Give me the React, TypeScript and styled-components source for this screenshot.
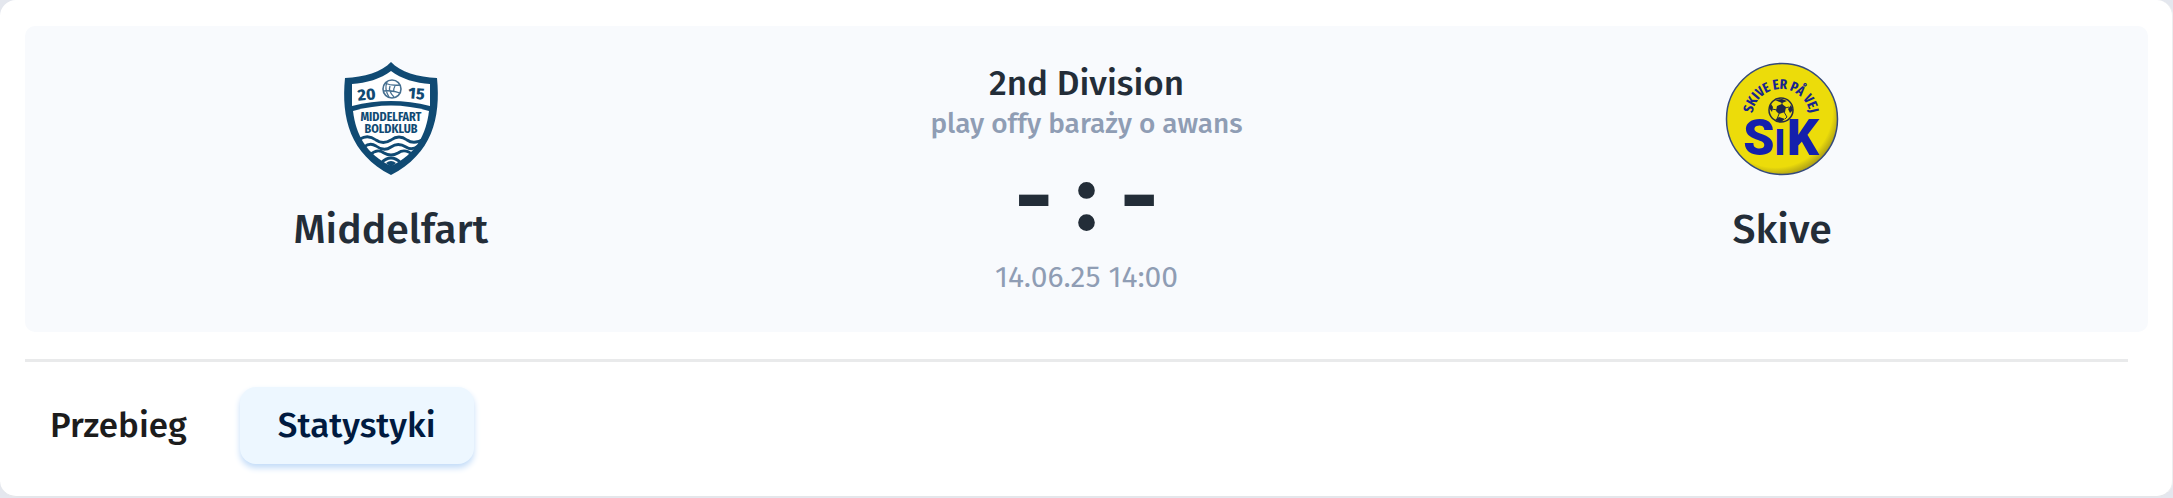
import React from "react";
import styled, { createGlobalStyle } from "styled-components";

const GlobalStyle = createGlobalStyle`
  *, *::before, *::after { box-sizing: border-box; }
  body {
    margin: 0;
    background: #e4e7ee;
    font-family: "Fira Sans", "Noto Sans", sans-serif;
    color: #232d38;
  }
`;

const Card = styled.main`
  display: flex;
  flex-direction: column;
  padding: 26px 24px 32px 25px;
  background: #ffffff;
  border-right: 1px solid #eceeef;
  border-bottom: 1px solid #e4e6e9;
  border-radius: 16px;
`;

const MatchHeader = styled.section`
  display: grid;
  grid-template-columns: repeat(3, 1fr);
  padding: 36px 18px 38px;
  background: #f8fafd;
  border-radius: 10px;
`;

const Team = styled.div`
  display: flex;
  flex-direction: column;
  align-items: center;
  gap: 24px;
`;

const Crest = styled.svg`
  display: block;
  width: 114px;
  height: 114px;
`;

const TeamName = styled.h2`
  margin: 0;
  font-size: 41px;
  line-height: 60px;
  font-weight: 500;
`;

const MatchInfo = styled.div`
  display: flex;
  flex-direction: column;
  align-items: center;
`;

const League = styled.h1`
  margin: 0 0 2px;
  font-size: 35px;
  line-height: 42px;
  font-weight: 500;
`;

const Stage = styled.p`
  margin: 0;
  font-size: 28px;
  line-height: 36px;
  font-weight: 500;
  color: #8f9db4;
`;

const Score = styled.div`
  display: flex;
  align-items: center;
  gap: 23px;
  margin: 14px 0 20px;
  font-size: 92px;
  line-height: 84px;
  font-weight: 700;
`;

const Kickoff = styled.time`
  font-size: 30px;
  line-height: 34px;
  color: #8f9db4;
`;

const Divider = styled.hr`
  width: auto;
  height: 3px;
  margin: 27px 20px 25px 0;
  border: 0;
  background: #e9eaeb;
`;

const Tabs = styled.nav`
  display: flex;
  gap: 28px;
`;

const Tab = styled.button<{ $active?: boolean }>`
  padding: 16px ${(p) => (p.$active ? "38px" : "25px")};
  border: 0;
  border-radius: 16px;
  background: ${(p) => (p.$active ? "#edf7ff" : "transparent")};
  box-shadow: ${(p) => (p.$active ? "0 4px 6px #c3dcf8" : "none")};
  color: ${(p) => (p.$active ? "#001a40" : "#1c1c1c")};
  font: inherit;
  font-size: 35px;
  line-height: 45px;
  font-weight: 500;
`;

const MiddelfartCrest = () => (
  <Crest viewBox="0 0 114 114" role="img" aria-label="Middelfart">
    <path d="M57 0C66 10 84 15 103 16C107 56 98 92 57 113C16 92 7 56 11 16C30 15 48 10 57 0Z" fill="#104a73" />
    <path d="M57 9C67 17 82 21 96 22L96 44Q57 34 18 44L18 22C32 21 47 17 57 9Z" fill="#fff" />
    <path d="M19 49Q57 38 95 49C92 73 82 92 57 104C32 92 22 73 19 49Z" fill="#fff" />
    <g fill="none" stroke="#104a73" strokeWidth="2.8">
      <path d="M26 77Q34 72 42 78Q49 83 57 78Q65 72 73 78Q80 83 90 77" />
      <path d="M30 85Q36 80 42 84Q50 90 57 85Q64 80 72 85Q78 89 84 84" />
      <path d="M36 93Q43 86 50 91Q57 95 64 91Q71 86 79 93" />
      <path d="M47 101Q57 91 67 101" />
    </g>
    <path d="M52 101Q57 97 62 101L57 105Z" fill="#104a73" />
    <circle cx="58" cy="27" r="9" fill="#fff" stroke="#466f90" strokeWidth="1.6" />
    <path d="M51 21Q57 24 66 23M53 20Q50 27 55 35M56 24Q54 29 60 35M50 29Q58 28 66 31M61 24Q59 27 60 30" fill="none" stroke="#466f90" strokeWidth="1.3" />
    <g fill="#104a73" fontFamily="Fira Sans, sans-serif" fontWeight="800" textAnchor="middle">
      <text x="33" y="38" fontSize="16" transform="rotate(-5 33 38)">20</text>
      <text x="82" y="37" fontSize="16" transform="rotate(5 82 37)">15</text>
    </g>
    <g fill="#104a73" fontFamily="Fira Sans Condensed, Fira Sans, sans-serif" fontWeight="700" fontSize="12" textAnchor="middle">
      <text x="57" y="59">MIDDELFART</text>
      <text x="57" y="71">BOLDKLUB</text>
    </g>
  </Crest>
);

const SkiveCrest = () => (
  <Crest viewBox="0 0 114 114" role="img" aria-label="Skive">
    <defs>
      <radialGradient id="badge" cx="44%" cy="42%" r="60%">
        <stop offset="0.86" stopColor="#ecdc0a" />
        <stop offset="1" stopColor="#a89b18" />
      </radialGradient>
      <path id="motto" d="M27 56A29 29 0 0 1 85 56" />
    </defs>
    <circle cx="57" cy="57" r="55.5" fill="url(#badge)" stroke="#34497a" strokeWidth="1.5" />
    <text fill="#17248e" fontFamily="Fira Sans Extra Condensed, Fira Sans Condensed, Roboto Condensed, Open Sans Condensed, Fira Sans, sans-serif" fontSize="14" fontWeight="700" textAnchor="middle">
      <textPath href="#motto" startOffset="50%">SKIVE ER PÅ VEJ</textPath>
    </text>
    <g fill="#1420ac" fontFamily="Roboto, sans-serif" fontWeight="900" textAnchor="middle">
      <text x="34" y="93" fontSize="50">S</text>
      <text x="55" y="93" fontSize="36">I</text>
      <text x="78" y="93" fontSize="50">K</text>
    </g>
    <circle cx="56" cy="48" r="12" fill="#ecdc0a" stroke="#272c46" strokeWidth="1.5" />
    <path d="M52 44L57 42L61 45L60 50L54 52L51 49ZM50 38L57 37L62 39L57 41ZM44 46L46 42L48 45L47 50ZM66 43L68 48L65 51L63 47ZM50 58L54 55L60 57L56 60Z" fill="#20264c" />
    <path d="M57 43V40M60 46L64 45M59 50L62 55L60 57M54 52L52 57M52 48L47 47" fill="none" stroke="#272c46" strokeWidth="1" />
  </Crest>
);

export default function App() {
  return (
    <>
      <GlobalStyle />
      <Card>
        <MatchHeader>
          <Team>
            <MiddelfartCrest />
            <TeamName>Middelfart</TeamName>
          </Team>
          <MatchInfo>
            <League>2nd Division</League>
            <Stage>play offy baraży o awans</Stage>
            <Score>
              <span>-</span>
              <span>:</span>
              <span>-</span>
            </Score>
            <Kickoff dateTime="2025-06-14T14:00">14.06.25 14:00</Kickoff>
          </MatchInfo>
          <Team>
            <SkiveCrest />
            <TeamName>Skive</TeamName>
          </Team>
        </MatchHeader>
        <Divider />
        <Tabs aria-label="Match views">
          <Tab type="button">Przebieg</Tab>
          <Tab type="button" $active aria-current="page">Statystyki</Tab>
        </Tabs>
      </Card>
    </>
  );
}
